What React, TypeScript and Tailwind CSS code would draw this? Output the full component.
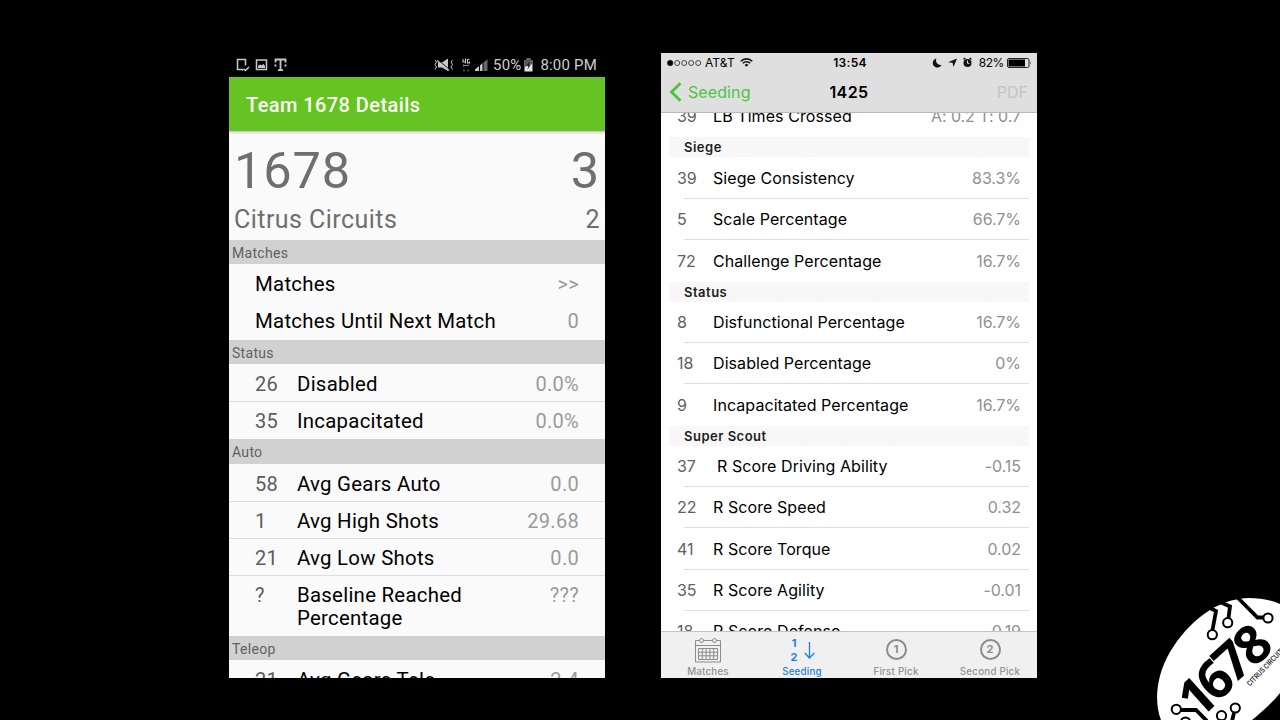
import React from "react";

type Row = { rank?: string; label: string; value: string; h: string; line?: boolean; lead?: boolean; first?: boolean };

function AHead({ children, h }: { children: string; h: string }) {
  return (
    <div className={`${h} flex shrink-0 items-center bg-[#d1d1d1] pl-[3px] pt-[2px] text-[14px] tracking-[0.3px] text-[#616161]`}>
      {children}
    </div>
  );
}

function ARow({ rank, label, value, h, line, first }: Row) {
  return (
    <div className={`${h} ${line ? "border-b border-[#dcdcdc]" : ""} ${first ? "pt-[9px]" : "pt-[8px]"} flex shrink-0 items-start pl-[26px] pr-[26px] text-[20px] leading-[23px] tracking-[0.3px]`}>
      {rank && <span className="w-[42px] shrink-0 text-[#5c5c5c]">{rank}</span>}
      <span className="w-[250px] whitespace-pre-line text-[20.4px] tracking-[0.26px] text-black">{label}</span>
      <span className="ml-auto text-right text-[#9a9a9a]">{value}</span>
    </div>
  );
}

function AndroidPhone() {
  return (
    <div className="mt-[53px] flex h-[625px] w-[376px] flex-col overflow-hidden bg-[#fafafa] font-['Roboto',sans-serif]">
      <div className="flex h-[24px] shrink-0 items-center bg-black pl-[6px] pr-[8px] text-[15px] text-[#cfcfcf]">
        <svg width="54" height="18" viewBox="0 0 54 18" fill="none" stroke="#c8c8c8" strokeWidth="1.5">
          <path d="M10.500 9.500V3.500H2.500V13.500H7M7 14.500L8.500 13M9 13L10.500 14.500L14 11" />
          <path d="M21.500 4h10v9.500h-10z" />
          <path d="M23 12v-2l2-1.500 1.500 1L28.500 8l1.500 2v2z" fill="#c8c8c8" stroke="none" />
          <path d="M40.500 6.500V3.500H50.500V6.500M45.500 3.500V14M43 14.200H48" strokeWidth="1.800" />
          <path d="M39.500 9.500h2M49.500 9.500h2" strokeWidth="2" />
        </svg>
        <svg className="ml-[143px]" width="58" height="18" viewBox="0 0 58 18" fill="none" stroke="#c8c8c8">
          <path d="M3 4l1.500 2-1.500 2.500 1.500 2.500-1.500 2.500M20.500 4l-1.500 2 1.500 2.500-1.500 2.500 1.500 2.500" />
          <path d="M6 6.500h4l6-4v12.500L10 11.500H6z" fill="#c8c8c8" stroke="none" />
          <path d="M6 4L18 14" stroke="#000" strokeWidth="1" />
          <path d="M5 4.500L17 14.500" strokeWidth="1.300" />
          <path d="M43 15v-1.500L47 10v5zM48 9.500l2.500-2.500v8H48z" fill="#c8c8c8" stroke="none" />
          <path d="M51.500 6.500L55.500 3v12h-4z" fill="#666" stroke="none" />
          <path d="M31 3v3h3M33.500 2.500v5M37.500 3.500h-2v3.500h2V5.500" strokeWidth="1.100" />
          <path d="M31.500 8.500v2M31.500 9.500h5V8.500M32 13.500v2M36 13.500v2" stroke="#888" />
        </svg>
        <span className="ml-[3px] tracking-[0.2px]">50%</span>
        <svg className="ml-[3px]" width="9" height="14" viewBox="0 0 9 14">
          <path d="M0.500 2h2V0.500h4V2h2v11.500h-8z" fill="#e2e2e2" />
          <path d="M0.500 2h2V0.500h4V2h2v4L0.500 9z" fill="#5a5a5a" />
          <path d="M5.500 3.500L2.500 7.500H4.500l-1 4L6.500 7H4.800z" fill="#111" />
        </svg>
        <span className="ml-auto whitespace-nowrap tracking-[0.2px]">8:00 PM</span>
      </div>
      <div className="z-10 flex h-[54px] shrink-0 items-center bg-[#65c423] pl-[17px] pt-[2px] text-[20px] font-medium tracking-[0.42px] text-[#fbfff5] shadow-[0_1px_3px_rgba(0,0,0,0.3)]">
        Team 1678 Details
      </div>
      <div className="flex h-[109px] shrink-0 flex-col pl-[5px] pr-[5px] text-[#6f6f6f]">
        <div className="flex h-[74px] items-center justify-between pt-[5px] text-[50.5px] leading-[58px] tracking-[0.9px]">
          <span>1678</span>
          <span>3</span>
        </div>
        <div className="flex h-[30px] items-center justify-between text-[25px] leading-[30px] tracking-[0.45px]">
          <span>Citrus Circuits</span>
          <span>2</span>
        </div>
      </div>
      <AHead h="h-[24px]">Matches</AHead>
      <ARow h="h-[38px]" label="Matches" value=">>" first />
      <ARow h="h-[38px]" label="Matches Until Next Match" value="0" />
      <AHead h="h-[24px]">Status</AHead>
      <ARow h="h-[38px]" rank="26" label="Disabled" value="0.0%" line first />
      <ARow h="h-[37px]" rank="35" label="Incapacitated" value="0.0%" />
      <AHead h="h-[25px]">Auto</AHead>
      <ARow h="h-[38px]" rank="58" label="Avg Gears Auto" value="0.0" line first />
      <ARow h="h-[37px]" rank="1" label="Avg High Shots" value="29.68" line />
      <ARow h="h-[37px]" rank="21" label="Avg Low Shots" value="0.0" line />
      <ARow h="h-[60px]" rank="?" label={"Baseline Reached\nPercentage"} value="???" />
      <AHead h="h-[24px]">Teleop</AHead>
      <ARow h="h-[38px]" rank="21" label="Avg Gears Tele" value="2.4" first />
    </div>
  );
}

function IHead({ children, h }: { children: string; h: string }) {
  return (
    <div className={`${h} mx-[8px] flex shrink-0 items-center bg-[#f7f7f7] pl-[15px] pt-[1px] text-[13px] font-semibold tracking-[0.5px] text-[#1d1d1d]`}>
      {children}
    </div>
  );
}

function IRow({ rank, label, value, h, line, lead }: Row) {
  return (
    <div className={`${h} flex shrink-0 flex-col`}>
      <div className="flex h-[41px] items-center pl-[16px] pr-[16px] text-[16px] tracking-[-0.05px]">
        <span className="w-[36px] shrink-0 text-[#606060]">{rank}</span>
        <span className={`${lead ? "pl-[4px]" : ""} whitespace-nowrap tracking-[0.08px] text-black`}>{label}</span>
        <span className="ml-auto whitespace-nowrap text-[#8f8f93]">{value}</span>
      </div>
      {line && <div className="mt-auto ml-[23px] mr-[8px] h-px shrink-0 bg-[#dedee0]" />}
    </div>
  );
}

function Tab({ label, active, children }: { label: string; active?: boolean; children: React.ReactNode }) {
  return (
    <div className={`${active ? "text-[#1f7fe8]" : "text-[#929292]"} flex w-[94px] flex-col items-center pt-[4px]`}>
      <div className="flex h-[28px] items-center justify-center">{children}</div>
      <span className="mt-[2px] whitespace-nowrap text-[9.8px] leading-[12px] font-medium tracking-[0.2px]">{label}</span>
    </div>
  );
}

function ApplePhone() {
  return (
    <div className="mt-[53px] ml-[56px] flex h-[625px] w-[376px] flex-col overflow-hidden bg-white font-['Inter',sans-serif]">
      <div className="z-10 flex h-[60px] shrink-0 flex-col border-b border-[#b9b9b9] bg-[#dfdfdf]">
        <div className="grid h-[19px] grid-cols-3 items-center pl-[6px] pr-[5px] text-[12px] text-black">
          <div className="flex items-center">
            <svg width="35" height="8" viewBox="0 0 35 8" fill="none" stroke="#222" strokeWidth="0.800">
              <circle cx="3.200" cy="4" r="2.700" fill="#000" />
              <circle cx="10.200" cy="4" r="2.500" />
              <circle cx="17.200" cy="4" r="2.500" />
              <circle cx="24.200" cy="4" r="2.500" />
              <circle cx="31.200" cy="4" r="2.500" />
            </svg>
            <span className="ml-[3px] tracking-[0.1px]">AT&amp;T</span>
            <svg className="ml-[5px]" width="13" height="9" viewBox="0 0 13 9" fill="none" stroke="#111" strokeWidth="1.600">
              <path d="M0.800 3.300a8 8 0 0 1 11.400 0M2.800 5.300a5.200 5.200 0 0 1 7.400 0" />
              <path d="M6.500 8.800L4.600 6.900a2.700 2.700 0 0 1 3.800 0z" fill="#111" stroke="none" />
            </svg>
          </div>
          <span className="pl-[1px] text-center font-semibold tracking-[0.3px]">13:54</span>
          <div className="flex items-center justify-end">
            <svg width="42" height="11" viewBox="0 0 42 11">
              <path d="M5.500 1.500a4.600 4.600 0 0 0 5 6.500A4.600 4.600 0 1 1 5.500 1.500z" fill="#111" />
              <path d="M26 1.500L22.500 10l-1-4.200L17 5.200z" fill="#111" />
              <circle cx="36.500" cy="6" r="4" fill="#111" />
              <path d="M32.500 2.500l1.800-1.500M40.500 2.500L38.700 1" stroke="#111" strokeWidth="1.500" />
              <path d="M36.500 3.500V6.300H38.500" stroke="#dfdfdf" fill="none" />
            </svg>
            <span className="ml-[6px] tracking-[-0.4px]">82%</span>
            <svg className="ml-[3px]" width="25" height="10" viewBox="0 0 25 10">
              <rect x="0.500" y="0.500" width="21.500" height="9" rx="1.500" fill="none" stroke="#222" />
              <rect x="1.500" y="1.500" width="16.500" height="7" fill="#000" />
              <path d="M23 3.200q1.500 1.800 0 3.600z" fill="#222" />
            </svg>
          </div>
        </div>
        <div className="grid h-[40px] grid-cols-3 items-center pl-[8px] pr-[9px] text-[16px]">
          <div className="flex items-center text-[#4cc441]">
            <svg width="13" height="20" viewBox="0 0 13 20" fill="none" stroke="currentColor" strokeWidth="3">
              <path d="M11.500 1.200L2.500 10l9 8.800" />
            </svg>
            <span className="ml-[6px] tracking-[0.1px]">Seeding</span>
          </div>
          <span className="pl-[1px] text-center font-semibold tracking-[0.4px]">1425</span>
          <span className="text-right text-[#c4c4c4]">PDF</span>
        </div>
      </div>
      <div className="flex h-[518px] shrink-0 flex-col overflow-hidden">
        <div className="-mt-[18px] flex flex-col">
          <IRow h="h-[42px]" rank="39" label="LB Times Crossed" value="A: 0.2 T: 0.7" />
          <IHead h="h-[20px]">Siege</IHead>
          <IRow h="h-[42px]" rank="39" label="Siege Consistency" value="83.3%" line />
          <IRow h="h-[41px]" rank="5" label="Scale Percentage" value="66.7%" line />
          <IRow h="h-[42px]" rank="72" label="Challenge Percentage" value="16.7%" />
          <IHead h="h-[20px]">Status</IHead>
          <IRow h="h-[41px]" rank="8" label="Disfunctional Percentage" value="16.7%" line />
          <IRow h="h-[41px]" rank="18" label="Disabled Percentage" value="0%" line />
          <IRow h="h-[42px]" rank="9" label="Incapacitated Percentage" value="16.7%" />
          <IHead h="h-[20px]">Super Scout</IHead>
          <IRow h="h-[41px]" rank="37" label="R Score Driving Ability" value="-0.15" line lead />
          <IRow h="h-[41px]" rank="22" label="R Score Speed" value="0.32" line />
          <IRow h="h-[42px]" rank="41" label="R Score Torque" value="0.02" line />
          <IRow h="h-[41px]" rank="35" label="R Score Agility" value="-0.01" line />
          <div className="-mt-px">
            <IRow h="h-[41px]" rank="18" label="R Score Defense" value="-0.19" />
          </div>
        </div>
      </div>
      <div className="flex h-[47px] shrink-0 border-t border-[#c4c4c4] bg-[#f0f0f0]">
        <Tab label="Matches">
          <svg width="26" height="25" viewBox="0 0 26 25" fill="none" stroke="#8c8c8c" strokeWidth="1">
            <path d="M4.500 2.500H0.500V24H25.500V2.500H21.500M8.500 2.500H17.500M0.500 7.500H25.500" />
            <circle cx="6.500" cy="2.500" r="2" />
            <circle cx="19.500" cy="2.500" r="2" />
            <path d="M3.500 10.500h19v11h-19zM7.300 10.500v11M11.100 10.500v11M14.900 10.500v11M18.700 10.500v11M3.500 14.200h19M3.500 17.800h19" />
          </svg>
        </Tab>
        <Tab label="Seeding" active>
          <div className="flex items-center pl-[2px]">
            <div className="flex flex-col text-center text-[11px] leading-[14px] font-bold">
              <span>1</span>
              <span>2</span>
            </div>
            <svg className="ml-[7px]" width="11" height="17" viewBox="0 0 11 17" fill="none" stroke="currentColor" strokeWidth="1.300">
              <path d="M5.500 0V16M0.700 11l4.800 5 4.800-5" />
            </svg>
          </div>
        </Tab>
        <Tab label="First Pick">
          <div className="-mt-[2px] flex size-[21px] items-center justify-center rounded-full border-2 border-[#8c8c8c] text-[11px] font-bold text-[#8c8c8c]">1</div>
        </Tab>
        <Tab label="Second Pick">
          <div className="-mt-[2px] flex size-[21px] items-center justify-center rounded-full border-2 border-[#8c8c8c] text-[11px] font-bold text-[#8c8c8c]">2</div>
        </Tab>
      </div>
    </div>
  );
}

function Logo() {
  return (
    <svg className="ml-auto self-end" width="130" height="130" viewBox="0 0 130 130">
      <path d="M11 130C4 112 6 86 20 62C38 32 66 9 98 8C110 8 121 10 130 14V103C122 113 112 122 102 130Z" fill="#fff" />
      <g fill="none" stroke="#000" strokeWidth="3.800">
        <path d="M58 17L66 21L62.500 40M70 12L80 16.500L78.500 28M88 8L107.500 27.500H113M31 120H46L57 131M84 123L82 131" />
      </g>
      <g fill="#fff" stroke="#000" strokeWidth="2">
        <circle cx="62.300" cy="44.700" r="4.600" />
        <circle cx="77.700" cy="32.700" r="4.600" />
        <circle cx="118" cy="28" r="4.600" />
        <circle cx="26.300" cy="119.300" r="4.600" />
        <circle cx="35.500" cy="132" r="4.600" />
        <circle cx="71.500" cy="125.700" r="4.600" />
        <circle cx="85.300" cy="118" r="4.600" />
      </g>
      <g transform="translate(63.300 117.300) rotate(-42)" fill="#000" fontFamily="Open Sans, sans-serif" fontWeight="700" fontSize="53" textAnchor="middle">
        <text x="-5" y="0">1</text>
        <text x="19.500" y="-1">6</text>
        <text x="45" y="-3">7</text>
        <text x="71" y="-2">8</text>
      </g>
      <text transform="translate(100 96.500) rotate(-46)" fontFamily="Roboto, sans-serif" fontWeight="500" fontSize="7.5" textLength="52" lengthAdjust="spacingAndGlyphs" fill="#222">CITRUS CIRCUITS</text>
    </svg>
  );
}

export default function App() {
  return (
    <div className="flex h-[720px] w-[1280px] items-start overflow-hidden bg-black pl-[229px]">
      <AndroidPhone />
      <ApplePhone />
      <Logo />
    </div>
  );
}
